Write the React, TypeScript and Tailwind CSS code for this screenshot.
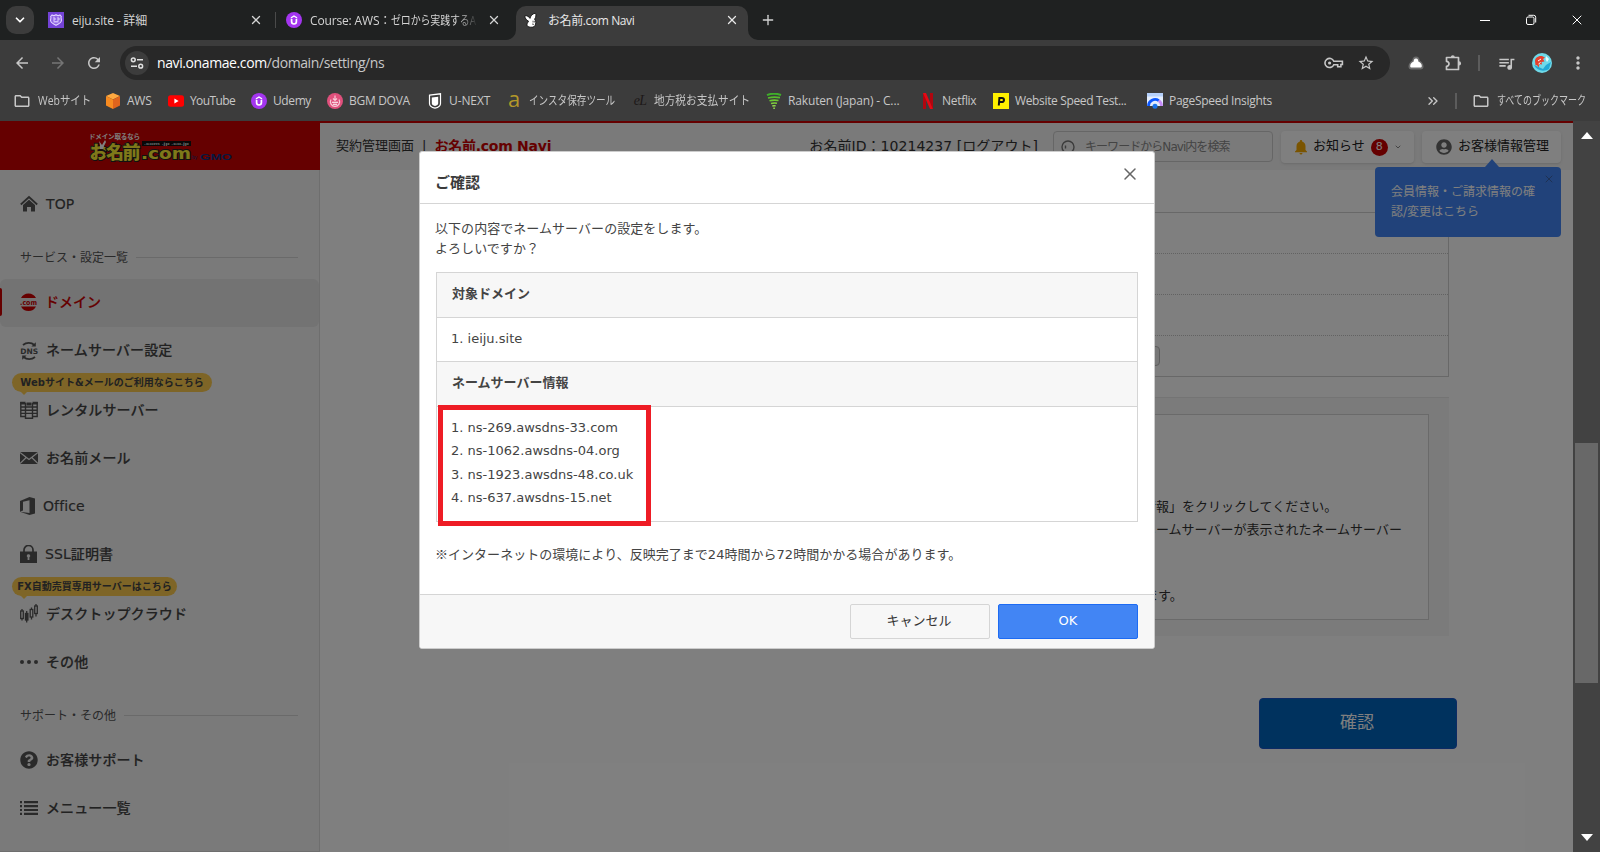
import React from "react";
import {
  MdArrowBack,
  MdArrowForward,
  MdRefresh,
  MdStarBorder,
  MdMoreVert,
  MdOutlineFolder,
  MdQueueMusic,
  MdNotifications,
} from "react-icons/md";
import { FaQuestionCircle, FaUserCircle } from "react-icons/fa";
import { ChevronDown, ChevronsRight, Plus, X } from "lucide-react";

const UdemyIcon = () => (
  <svg viewBox="0 0 16 16" className="size-4 shrink-0">
    <circle cx="8" cy="8" r="8" fill="#a435f0" />
    <path d="M5.6 7v2.6a2.4 2.4 0 0 0 4.8 0V7" fill="none" stroke="#fff" strokeWidth="1.7" />
    <path d="M4.8 5.2 8 3.2l3.2 2v1.5L8 4.8 4.8 6.7z" fill="#fff" />
  </svg>
);

const Route53Icon = () => (
  <svg viewBox="0 0 16 16" className="size-4 shrink-0">
    <rect width="16" height="16" fill="#7443d6" />
    <path
      d="M4 3c1.300.9 2.700.7 4-.3 1.300 1 2.700 1.200 4 .3l1.300 1.500c-.9 1.400.5 2.500.1 4.500-.5 2.300-3.200 2.600-5.400 4.300-2.200-1.700-4.900-2-5.400-4.300-.4-2 1-3.100.1-4.500z"
      fill="#8e63e2"
      stroke="#e2d4ff"
      strokeWidth="1.100"
    />
    <path d="M5 6h2v2H5M9 6h2v2H9" fill="none" stroke="#e2d4ff" strokeWidth="1" />
    <path d="M5.500 9.800h5" stroke="#e2d4ff" strokeWidth="1.200" />
  </svg>
);

const RabbitIcon = () => (
  <svg viewBox="0 0 16 16" className="size-4 shrink-0">
    <path
      d="M.8 3.800c1.500-.5 3 .2 4.200 1.300l1 1.300C6.500 4.300 8 1.800 11.200 1.200c1.300 1.400.8 4-.6 6l1 1.800c.5 2-.1 4.200-1.400 5.600-1.700 1-5 .8-6.700-.3-.8-1.200-.6-2.800.4-4l.6-1.200C2.500 8.300.9 6.300.8 3.800z"
      fill="#fff"
      stroke="#111"
      strokeWidth=".9"
    />
    <path d="M9 8.700v1.800M10.300 9v1.500M8 12l2 .4" stroke="#333" strokeWidth=".8" />
  </svg>
);

const AwsIcon = () => (
  <svg viewBox="0 0 16 16" className="size-4 shrink-0">
    <path d="M8 0l7 3-7 3.500L1 3z" fill="#ffa940" />
    <path d="M1 3l7 3.500V16l-7-3.500z" fill="#f78b20" />
    <path d="M15 3L8 6.500V16l7-3.500z" fill="#e0641d" />
  </svg>
);

const YoutubeIcon = () => (
  <svg viewBox="0 0 16 16" className="size-4 shrink-0">
    <rect y="2.300" width="16" height="11.400" rx="2.500" fill="#f00" />
    <path d="M6.400 5.600v4.800L10.600 8z" fill="#fff" />
  </svg>
);

const DovaIcon = () => (
  <svg viewBox="0 0 16 16" className="size-4 shrink-0">
    <circle cx="8" cy="8" r="8" fill="#e0507c" />
    <path d="M4 6.500a4.600 4.600 0 1 0 8 0M6 5.500l2 2 2-2M8 2.500v5" fill="none" stroke="#f8cbd8" strokeWidth="1.200" />
    <path d="M5 9.300h6M6 11.300h4" stroke="#fff" strokeWidth="1.100" />
  </svg>
);

const UnextIcon = () => (
  <svg viewBox="0 0 16 16" className="size-4 shrink-0">
    <path d="M2.500 2.200L13.500.8v9.700c0 2.600-2.300 4-5.500 4.700-3.200-.7-5.500-2.100-5.500-4.700z" fill="none" stroke="#fff" strokeWidth="1.200" />
    <path d="M4.800 4.500l6.400-.8v6.500c0 1.500-1.200 2.300-3.200 2.800-2-.5-3.200-1.300-3.200-2.800z" fill="#fff" />
  </svg>
);

const GoldAIcon = () => (
  <span className="-mt-1.5 w-3.5 shrink-0 text-center font-['Open_Sans'] text-[22px] leading-4 text-[#b3982a]">a</span>
);

const TaxIcon = () => (
  <span className="w-4 shrink-0 text-center font-['Liberation_Serif'] text-[14px] leading-4 italic tracking-tighter text-[#1c1818]">
    eL
  </span>
);

const RakutenIcon = () => (
  <svg viewBox="0 0 16 16" className="size-4 shrink-0">
    <path d="M1 2.200C5 .300 11 .500 15 2" stroke="#3fae2a" strokeWidth="2" fill="none" />
    <path d="M2 5c4-1 8-1 12-.4" stroke="#56bd2c" strokeWidth="1.700" fill="none" />
    <path d="M3.500 7.800c3-.8 6-.8 9-.3" stroke="#6cc832" strokeWidth="1.700" fill="none" />
    <path d="M5 10.500c2-.6 4-.6 6-.2" stroke="#7ed13c" strokeWidth="1.600" fill="none" />
    <path d="M6.300 13c1.200-.4 2.200-.4 3.400-.1M7.300 15.200h1.600" stroke="#8fd94b" strokeWidth="1.400" fill="none" />
  </svg>
);

const NetflixIcon = () => (
  <svg viewBox="0 0 16 16" className="size-4 shrink-0">
    <path d="M3 0h3v16l-3 .3zM10 0h3v16.300L10 16z" fill="#b1060f" />
    <path d="M3 0h3l7 16.300-3-.3z" fill="#e50914" />
  </svg>
);

const PingdomIcon = () => (
  <svg viewBox="0 0 16 16" className="size-4 shrink-0">
    <rect width="16" height="16" fill="#fff000" />
    <path d="M5.800 12.500l.6-7.600h2.500a2 2 0 0 1 0 4.200H6.500" fill="none" stroke="#111" strokeWidth="2" />
  </svg>
);

const PageSpeedIcon = () => (
  <svg viewBox="0 0 16 16" className="size-4 shrink-0">
    <rect width="16" height="13" fill="#e3edfd" />
    <rect width="16" height="3.500" fill="#b5d0fb" />
    <path d="M1.500 13a6.600 6.600 0 0 1 10.300-5.400" fill="none" stroke="#0b57ff" strokeWidth="2.800" />
    <path d="M11.800 7.600a6.600 6.600 0 0 1 2.700 5.400" fill="none" stroke="#c58af9" strokeWidth="2.800" />
    <circle cx="8" cy="13.200" r="2.500" fill="#1a73e8" />
  </svg>
);

const KeyIcon = () => (
  <svg viewBox="0 0 20 12" className="h-3 w-5" fill="none" stroke="#c7c7c7" strokeWidth="1.600">
    <path d="M9.800 4.200h8.600v3.300h-1.500v2.300h-3.200V7.700H9.800a4.600 4.600 0 1 1 0-3.500z" />
    <circle cx="5.600" cy="6" r="1.600" fill="#c7c7c7" stroke="none" />
  </svg>
);

const ExtensionIcon = () => (
  <svg viewBox="0 0 18 18" className="size-[18px]">
    <path
      d="M2.500 3.500h12v12h-12v-3.200a2.400 2.400 0 0 0 0-5z"
      fill="none"
      stroke="#c7c7c7"
      strokeWidth="1.700"
      strokeLinejoin="round"
    />
    <path d="M6.800 3.200a2 2 0 0 1 4 0zM15 7.300a2.100 2.100 0 0 1 0 4.200z" fill="#c7c7c7" />
  </svg>
);

const FolderIcon = () => <MdOutlineFolder className="-mx-px size-[18px] shrink-0 text-[#c7c7c7]" />;

const bookmarks = [
  { label: "Webサイト", icon: <FolderIcon />, width: "w-[91px]", fit: "ml-0.5 origin-left scale-x-[0.87]" },
  { label: "AWS", icon: <AwsIcon />, width: "w-[63px]", fit: "tracking-[-0.25px]" },
  { label: "YouTube", icon: <YoutubeIcon />, width: "w-[83px]", fit: "tracking-[-0.6px]" },
  { label: "Udemy", icon: <UdemyIcon />, width: "w-[76px]", fit: "tracking-[-0.4px]" },
  { label: "BGM DOVA", icon: <DovaIcon />, width: "w-[100px]", fit: "tracking-[-0.3px]" },
  { label: "U-NEXT", icon: <UnextIcon />, width: "w-[80px]", fit: "tracking-[-0.1px]" },
  { label: "インスタ保存ツール", icon: <GoldAIcon />, width: "w-[125px]", fit: "ml-0.5 origin-left scale-x-[0.8]" },
  { label: "地方税お支払サイト", icon: <TaxIcon />, width: "w-[134px]", fit: "origin-left scale-x-[0.89]" },
  { label: "Rakuten (Japan) - C...", icon: <RakutenIcon />, width: "w-[154px]", fit: "tracking-[-0.15px]" },
  { label: "Netflix", icon: <NetflixIcon />, width: "w-[73px]", fit: "tracking-[-0.3px]" },
  { label: "Website Speed Test...", icon: <PingdomIcon />, width: "w-[154px]", fit: "tracking-[-0.35px]" },
  { label: "PageSpeed Insights", icon: <PageSpeedIcon />, width: "w-[140px]", fit: "tracking-[-0.3px]" },
];

const TabStrip = () => (
  <div className="flex h-10 bg-[#1f2121] text-[12px] text-[#d4d4d4]">
    <div className="mt-1.5 ml-1.5 flex size-7 items-center justify-center rounded-[10px] bg-[#3c3c3c]">
      <ChevronDown className="size-3.5 text-white" strokeWidth={3} />
    </div>
    <div className="ml-3.5 flex h-10 w-[227px] items-center">
      <Route53Icon />
      <span className="mt-0.5 ml-2 flex-1 tracking-[-0.15px]">eiju.site - 詳細</span>
      <X className="mr-3 size-3.5" strokeWidth={2.2} />
    </div>
    <div className="mt-3 h-4 w-px bg-[#4a4a4a]" />
    <div className="ml-2.5 flex h-10 w-[230px] items-center">
      <UdemyIcon />
      <span className="mt-0.5 ml-2 w-[168px] whitespace-nowrap tracking-[-0.15px] [mask-image:linear-gradient(to_right,black_88%,transparent)]">
        Course: AWS：<span className="inline-block origin-left scale-x-[0.83]">ゼロから実践するA</span>
      </span>
      <X className="ml-[9px] size-3.5" strokeWidth={2.2} />
    </div>
    <div className="relative mt-1.5 flex h-[34px] w-[232px] items-center rounded-t-[10px] bg-[#3c3c3c] pb-1.5 pl-2 text-[#e8e8e8]">
      <svg viewBox="0 0 10 10" className="absolute bottom-0 -left-2.5 size-2.5">
        <path d="M10 0v10H0A10 10 0 0 0 10 0z" fill="#3c3c3c" />
      </svg>
      <svg viewBox="0 0 10 10" className="absolute -right-2.5 bottom-0 size-2.5">
        <path d="M0 0v10h10A10 10 0 0 1 0 0z" fill="#3c3c3c" />
      </svg>
      <RabbitIcon />
      <span className="mt-0.5 ml-2 flex-1 tracking-[-0.4px]">お名前.com Navi</span>
      <X className="mr-[9px] size-3.5" strokeWidth={2.2} />
    </div>
    <Plus className="mt-[12px] ml-3 size-4" strokeWidth={2} />
    <div className="ml-auto flex h-10 items-center text-white">
      <div className="flex w-[46px] justify-center">
        <div className="h-px w-2.5 bg-white" />
      </div>
      <div className="flex w-[46px] justify-center">
        <svg viewBox="0 0 10 10" className="size-2.5 overflow-visible" fill="none" stroke="#fff">
          <rect x=".5" y="2" width="7.500" height="7.500" rx="1.500" />
          <path d="M2.500 .300h5.200a2 2 0 0 1 2 2v5.200" />
        </svg>
      </div>
      <div className="flex w-[46px] justify-center">
        <X className="size-4" strokeWidth={1.500} />
      </div>
    </div>
  </div>
);

const AddressBar = () => (
  <div className="flex h-[46px] items-center text-[#c7c7c7]">
    <MdArrowBack className="ml-[13px] size-[18px]" />
    <MdArrowForward className="ml-[18px] size-[18px] text-[#757575]" />
    <MdRefresh className="ml-[18px] size-[18px]" />
    <div className="ml-[17px] flex h-[34px] w-[1270px] items-center rounded-full bg-[#282828] pl-[5px]">
      <div className="flex size-6 items-center justify-center rounded-full bg-[#3c3c3c]">
        <svg viewBox="0 0 14 14" className="size-3.5" fill="none" stroke="#e0e0e0" strokeWidth="1.500">
          <circle cx="3.300" cy="3.800" r="1.900" />
          <path d="M7 3.800h6M1 10.200h6" />
          <circle cx="10.700" cy="10.200" r="1.900" />
        </svg>
      </div>
      <span className="-mt-px ml-2 text-[14px] tracking-[-0.4px]">
        <span className="text-white">navi.onamae.com</span>/domain/setting/ns
      </span>
      <div className="ml-auto">
        <KeyIcon />
      </div>
      <MdStarBorder className="mr-[15px] ml-[13px] size-[18px]" />
    </div>
    <svg viewBox="0 0 16 14" className="ml-[18px] h-3.5 w-4">
      <path d="M8 .5c2.200 0 3.500 1.400 3.700 4C14 6 15.500 8 15.500 10.500c0 2-1 3-3 3h-9c-2 0-3-1-3-3C.5 8 2 6 4.300 4.500 4.500 1.900 5.800.5 8 .5z" fill="#6b6b6b" />
      <path d="M8 2.500c2 0 2.300 1.500 2.300 3 2 .7 3.500 2.500 3.500 4.500 0 1-.6 1.500-1.500 1.500H3.700c-.9 0-1.500-.5-1.500-1.500 0-2 1.500-3.800 3.500-4.500 0-1.500.3-3 2.300-3z" fill="#fff" />
    </svg>
    <div className="ml-5">
      <ExtensionIcon />
    </div>
    <div className="ml-[16px] h-4 w-0.5 bg-[#5c5c5c]" />
    <MdQueueMusic className="ml-[17px] size-[19px]" />
    <svg viewBox="0 0 20 20" className="ml-[16px] size-5">
      <circle cx="10" cy="10" r="10" fill="#6fd9e8" />
      <path d="M2 12c3 6 10 7 15 4l2-7-5 3-3 4z" fill="#22a9d6" />
      <path d="M3 8c0-3 3-5.500 7-5l3 1.500-2 1.500 1.500 2.500-3 .5.500 2.500-2.500-.5-1 3.500-1.500-2.500-1.500.5z" fill="#e8402c" />
      <path d="M6 8l3-2M6.500 11l2-1.500" stroke="#fff" strokeWidth="1" fill="none" />
      <path d="M14 3l3 3-2 3-1.500-3z" fill="#e4fbfd" />
    </svg>
    <MdMoreVert className="ml-[16px] size-[20px]" />
  </div>
);

const BookmarksBar = () => (
  <div className="flex h-[35px] items-center pb-[5px] pl-3.5 text-[12px] text-[#c7c7c7]">
    {bookmarks.map((item) => (
      <div key={item.label} className={`${item.width} flex shrink-0 items-center gap-1.5 whitespace-nowrap`}>
        {item.icon}
        <span className={item.fit}>{item.label}</span>
      </div>
    ))}
    <ChevronsRight className="ml-[138px] size-4 shrink-0" strokeWidth={2} />
    <div className="mr-4 ml-[14px] h-4 w-0.5 shrink-0 bg-[#5c5c5c]" />
    <FolderIcon />
    <span className="ml-2 w-[90px] origin-left scale-x-[0.75] whitespace-nowrap">すべてのブックマーク</span>
  </div>
);

const menuIcon = "w-[18px] h-[18px] shrink-0";

const HomeIcon = () => (
  <svg viewBox="0 0 18 18" className={menuIcon}>
    <path d="M.8 9.500L9 2l8.200 7.500" fill="none" stroke="#555" strokeWidth="1.800" />
    <path d="M3 10l6-5.200 6 5.200v6.500h-4V12H7v4.500H3z" fill="#555" />
  </svg>
);

const DomainIcon = () => (
  <svg viewBox="0 0 18 18" className={`${menuIcon} overflow-visible`}>
    <path d="M1 5a8.500 8.500 0 0 1 15 0zM1 13.500a8.500 8.500 0 0 0 15 0z" fill="#c00" />
    <text
      x="0"
      y="11.500"
      fill="#c00"
      textLength="17"
      lengthAdjust="spacingAndGlyphs"
      className="font-['DejaVu_Sans'] text-[7px] font-bold"
    >
      .com
    </text>
  </svg>
);

const DnsIcon = () => (
  <svg viewBox="0 0 18 18" className={`${menuIcon} overflow-visible`}>
    <path d="M3 4a9 9 0 0 1 11.500 0M15 16a9 9 0 0 1-11.500 0" fill="none" stroke="#555" strokeWidth="1.800" />
    <path d="M15.800 1.300v4.200h-4.400zM2.200 18.700v-4.200h4.400z" fill="#555" />
    <text x="9.300" y="12.800" textAnchor="middle" fill="#555" className="font-['DejaVu_Sans'] text-[7.5px] font-bold">
      DNS
    </text>
  </svg>
);

const ServerIcon = () => (
  <svg viewBox="0 0 18 18" className={menuIcon} fill="none" stroke="#555" strokeWidth="1.400">
    <path d="M.8 1v14.500h4.500M17.200 1v14.500h-4.500M1 6h16M1 9.200h16M1 12.400h16M5.500 2v15.200h7V2" />
    <path d="M.2 2.200h5.300M6.500 3h5M12.500 2.200h5.300" strokeWidth="2.800" />
  </svg>
);

const MailIcon = () => (
  <svg viewBox="0 0 18 18" className={menuIcon}>
    <path d="M0 3h18v12H0z" fill="#555" />
    <path d="M0 3.500l9 7 9-7M0 14.500l6.200-6M18 14.500l-6.200-6" fill="none" stroke="#f4f4f4" strokeWidth="1.200" />
  </svg>
);

const OfficeIcon = () => (
  <svg viewBox="0 0 15 18" className="h-[18px] w-[15px] shrink-0">
    <path d="M0 4l9.500-4L15 1.500v15L9.500 18 0 14.800l9.500 1.100V3.200L3 4.800v8.700l-3 1.300z" fill="#555" />
  </svg>
);

const LockIcon = () => (
  <svg viewBox="0 0 17 18" className="h-[18px] w-[17px] shrink-0">
    <path d="M4 8V5a4.500 4.500 0 0 1 9 0v3" fill="none" stroke="#555" strokeWidth="1.700" />
    <path d="M0 6.500h17V18H0z" fill="#555" />
    <path d="M8.500 9.300a1.600 1.600 0 0 1 .9 3v2.800H7.600v-2.800a1.600 1.600 0 0 1 .9-3z" fill="#f4f4f4" />
  </svg>
);

const CandleIcon = () => (
  <svg viewBox="0 0 18 18" className={`${menuIcon} overflow-visible`} fill="none" stroke="#555" strokeWidth="1.300">
    <rect x=".7" y="6" width="2.600" height="7.500" />
    <path d="M2 4v2M2 13.500v2M6.700 6v11.500" />
    <rect x="5.500" y="8.500" width="2.400" height="6.500" fill="#555" />
    <rect x="10.200" y="4.500" width="2.600" height="7.500" />
    <path d="M11.500 2.500v2M11.500 12v2.500" />
    <rect x="14.700" y="1" width="2.600" height="7.500" />
    <path d="M16-1v2M16 8.500v3" />
  </svg>
);

const DotsIcon = () => (
  <svg viewBox="0 0 18 18" className={menuIcon} fill="#555">
    <circle cx="2" cy="9" r="2" />
    <circle cx="9" cy="9" r="2" />
    <circle cx="16" cy="9" r="2" />
  </svg>
);

const ListIcon = () => (
  <svg viewBox="0 0 18 18" className={menuIcon} stroke="#555" strokeWidth="2.200">
    <path d="M0 3.200h2M4 3.200h14M0 7.100h2M4 7.100h14M0 11h2M4 11h14M0 14.900h2M4 14.900h14" />
  </svg>
);

interface MenuItemProps {
  icon: React.ReactNode;
  label: string;
  balloon?: string;
  balloonClass?: string;
}

const MenuItem = ({ icon, label, balloon, balloonClass }: MenuItemProps) => (
  <div className={`relative flex h-12 items-center gap-2 pb-0.5 pl-5 text-[14px] font-medium text-[#444] ${balloon ? "mt-3" : ""}`}>
    {balloon && (
      <div
        className={`absolute -top-3.5 left-3 flex h-[19px] items-center justify-center rounded-full bg-[#fccb4f] text-[10px] font-bold whitespace-nowrap text-[#444] ${balloonClass}`}
      >
        {balloon}
        <div className="absolute top-[18px] left-2 border-x-4 border-t-4 border-x-transparent border-t-[#fccb4f]" />
      </div>
    )}
    {icon}
    <span className="tracking-[0.1px] [-webkit-text-stroke:0.15px]">{label}</span>
  </div>
);

const SectionTitle = ({ children }: { children: React.ReactNode }) => (
  <div className="flex h-[50px] items-center pt-[7px] pr-[21px] pl-5 text-[12px] text-[#555]">
    <span>{children}</span>
    <div className="ml-2 h-px flex-1 bg-[#d5d5d5]" />
  </div>
);

const Logo = () => (
  <svg viewBox="0 0 144 32" className="ml-[88px] h-8 w-36">
    <text x="1" y="7.500" fill="#fff" textLength="51" className="font-['Noto_Sans_CJK_JP'] text-[6.5px] font-bold">
      ドメイン取るなら
    </text>
    <text x="1.500" y="27.500" fill="#fff032" stroke="#222" strokeWidth="2" paintOrder="stroke" textLength="51" className="font-['Noto_Sans_CJK_JP'] text-[18px] font-black">
      お名前
    </text>
    <text x="53" y="27.500" fill="#fff032" stroke="#222" strokeWidth="2" paintOrder="stroke" textLength="50" lengthAdjust="spacingAndGlyphs" className="font-['DejaVu_Sans'] text-[16px] font-bold">
      .com
    </text>
    <rect x="54" y="10" width="49" height="5" fill="#111" />
    <text x="56" y="13.800" fill="#ddd" textLength="45" lengthAdjust="spacingAndGlyphs" className="font-['Liberation_Sans'] text-[4px] font-bold">
      .com .jp .co.jp
    </text>
    <path d="M11 10l3 4 3-5 1 2-2 4-1 3h-3v-4z" fill="#fff" />
    <text x="104" y="28" fill="#0c3182" className="font-['Liberation_Sans'] text-[5px]">
      by
    </text>
    <text x="112" y="28.500" fill="#0c3182" textLength="32" lengthAdjust="spacingAndGlyphs" className="font-['Liberation_Sans'] text-[9px] font-bold">
      GMO
    </text>
  </svg>
);

const Sidebar = () => (
  <aside className="flex w-80 shrink-0 flex-col">
    <div className="h-[49px] bg-[#cb0000] pt-2.5">
      <Logo />
    </div>
    <nav className="flex-1 border-r border-b border-[#dcdcdc] bg-[#f4f4f4] pt-[11px]">
      <MenuItem icon={<HomeIcon />} label="TOP" />
      <SectionTitle>サービス・設定一覧</SectionTitle>
      <div className="relative flex h-12 items-center gap-2 rounded-md bg-[#e6e6e6] pb-0.5 pl-5 text-[14px] font-medium text-[#c00]">
        <div className="absolute top-[9px] left-0 h-7 w-0.5 rounded-r bg-[#c00]" />
        <DomainIcon />
        <span className="-ml-px [-webkit-text-stroke:0.15px]">ドメイン</span>
      </div>
      <MenuItem icon={<DnsIcon />} label="ネームサーバー設定" />
      <MenuItem icon={<ServerIcon />} label="レンタルサーバー" balloon="Webサイト&メールのご利用ならこちら" balloonClass="w-[200px]" />
      <MenuItem icon={<MailIcon />} label="お名前メール" />
      <MenuItem icon={<OfficeIcon />} label="Office" />
      <MenuItem icon={<LockIcon />} label="SSL証明書" />
      <MenuItem icon={<CandleIcon />} label="デスクトップクラウド" balloon="FX自動売買専用サーバーはこちら" balloonClass="w-[165px]" />
      <MenuItem icon={<DotsIcon />} label="その他" />
      <SectionTitle>サポート・その他</SectionTitle>
      <MenuItem icon={<FaQuestionCircle className="size-[18px] text-[#555]" />} label="お客様サポート" />
      <MenuItem icon={<ListIcon />} label="メニュー一覧" />
    </nav>
  </aside>
);

const PageHeader = () => (
  <header className="flex h-[49px] items-start border-t-2 border-[#cb0000] bg-[#f4f4f4] pr-3 pl-4 text-[13px] text-[#333]">
    <div className="flex h-[46px] items-center">
      <span>契約管理画面</span>
      <span className="mx-2">|</span>
      <span className="text-[14px] font-bold tracking-[-0.25px] text-[#cb0000]">お名前.com Navi</span>
    </div>
    <div className="ml-auto flex h-[46px] items-center text-[14px] tracking-[0.05px]">お名前ID：10214237 [ログアウト]</div>
    <div className="mt-2 ml-[15px] flex h-[31px] w-[220px] items-center rounded border border-[#ccc] pl-[7px] text-[12px] text-[#888]">
      <svg viewBox="0 0 14 14" className="size-3.5" fill="none" stroke="#777" strokeWidth="1.400">
        <circle cx="7" cy="7" r="6" />
        <path d="M4.500 5.500v3" />
      </svg>
      <span className="ml-2.5 tracking-[-0.95px] whitespace-nowrap">キーワードからNavi内を検索</span>
    </div>
    <div className="mt-2 ml-2 flex h-8 w-[133px] items-center rounded bg-white pl-[11px] text-[13px] shadow">
      <MdNotifications className="size-[18px] text-[#f5a900]" />
      <span className="-mt-0.5 ml-[3px] text-[#222]">お知らせ</span>
      <span className="ml-1.5 flex size-[17px] items-center justify-center rounded-full bg-[#cb0000] text-[11px] text-white">8</span>
      <ChevronDown className="ml-1.5 size-2 text-[#888]" strokeWidth={3} />
    </div>
    <div className="relative mt-2 ml-2 flex h-8 w-[139px] items-center rounded bg-white pl-3.5 text-[13px] text-[#222] shadow">
      <FaUserCircle className="size-4 text-[#666]" />
      <span className="-mt-0.5 ml-1.5">お客様情報管理</span>
      <div className="absolute top-9 right-0 h-[70px] w-[186px] rounded bg-[#4285f4] py-[15px] pl-4 text-[12px] leading-5 text-white">
        <div className="absolute -top-2 right-[62px] border-x-[7px] border-b-8 border-x-transparent border-b-[#4285f4]" />
        <X className="absolute top-1.5 right-1.5 size-3 text-[#3c62a8]" />
        会員情報・ご請求情報の確
        <br />
        認/変更はこちら
      </div>
    </div>
  </header>
);

const PageContent = () => (
  <main className="flex w-[1137px] flex-col pl-[110px]">
    <div className="mt-[42px] mr-2 h-[165px] border border-[#d0d0d0]">
      <div className="h-[41px] border-b border-dotted border-[#c4c4c4]" />
      <div className="h-[41px] border-b border-dotted border-[#c4c4c4]" />
      <div className="h-[41px] border-b border-dotted border-[#c4c4c4]" />
      <div className="flex h-10 items-center pl-[600px]">
        <div className="flex h-5 w-[129px] items-center justify-end rounded-sm border border-[#bbb] bg-[#f0f0f0] pr-[3px]">
          <ChevronDown className="size-1.5" strokeWidth={4} />
        </div>
      </div>
    </div>
    <div className="mt-5 mr-2 h-[239px] border-t border-[#e8e8e8] bg-[#f6f6f6] px-5 pt-4">
      <div className="h-[206px] border border-[#d4d4d4] bg-white pt-20 pl-[692px] text-[13px] leading-[23px] whitespace-nowrap text-[#333]">
        <p>情報」をクリックしてください。</p>
        <p>ネームサーバーが表示されたネームサーバー</p>
        <p className="mt-[43px] ml-0.5">ます。</p>
      </div>
    </div>
    <button className="mt-[62px] h-[51px] w-[198px] self-end rounded-sm border border-[#1a56c8] bg-[#0064bc] pr-0.5 pb-0.5 text-[17px] text-white">
      確認
    </button>
  </main>
);

const nameServers = ["ns-269.awsdns-33.com", "ns-1062.awsdns-04.org", "ns-1923.awsdns-48.co.uk", "ns-637.awsdns-15.net"];

const ConfirmDialog = () => (
  <div className="mt-[30px] ml-[419px] flex h-[498px] w-[736px] flex-col overflow-hidden rounded-[3px] border border-[#ccc] bg-white text-[13px] text-[#444]">
    <div className="flex h-[52px] shrink-0 items-center justify-between border-b border-[#d5d5d5] pt-[11px] pr-3.5 pl-[15px]">
      <h2 className="text-[15px] font-bold text-[#3a3a3a]">ご確認</h2>
      <X className="-mt-[18px] size-5 text-[#666]" strokeWidth={1.800} />
    </div>
    <div className="relative flex-1 px-4 pt-[15px]">
      <p className="-ml-px leading-5 tracking-[0.05px]">
        以下の内容でネームサーバーの設定をします。
        <br />
        よろしいですか？
      </p>
      <div className="mt-[13px] h-[250px] border border-[#d5d5d5]">
        <div className="flex h-[45px] items-center border-b border-[#d5d5d5] bg-[#f7f7f7] pb-[3px] pl-[15px] font-bold">対象ドメイン</div>
        <div className="flex h-11 items-center border-b border-[#d5d5d5] pb-0.5 pl-3.5">1. ieiju.site</div>
        <div className="flex h-[45px] items-center border-b border-[#d5d5d5] bg-[#f7f7f7] pb-[3px] pl-[15px] font-bold">ネームサーバー情報</div>
        <ol className="pt-[9px] pl-3.5 leading-[23.4px]">
          {nameServers.map((ns, i) => (
            <li key={ns}>
              {i + 1}. {ns}
            </li>
          ))}
        </ol>
      </div>
      <div className="absolute top-[201px] left-[18px] h-[121px] w-[213px] border-[5px] border-[#ee1c25]" />
      <p className="mt-[22px] -ml-px leading-5 tracking-[0.03px]">
        <span className="font-['Noto_Sans_CJK_JP']">※</span>
        インターネットの環境により、反映完了まで24時間から72時間かかる場合があります。
      </p>
    </div>
    <div className="flex h-[54px] shrink-0 justify-end gap-2 border-t border-[#d5d5d5] bg-[#f7f7f7] pt-[9px] pr-4">
      <button className="h-[35px] w-[140px] rounded-[2px] border border-[#d5d5d5] pr-0.5 pb-0.5 text-[#333]">キャンセル</button>
      <button className="h-[35px] w-[140px] rounded-[2px] border border-[#1d6bf3] bg-[#4285f4] pb-0.5 text-white">OK</button>
    </div>
  </div>
);

const Scrollbar = () => (
  <div className="flex w-[27px] flex-col items-center bg-[#424242]">
    <div className="mt-[11px] border-x-[6.5px] border-b-[7px] border-x-transparent border-b-white" />
    <div className="mt-[304px] h-60 w-[23px] bg-[#686868]" />
    <div className="mt-auto mb-[11px] border-x-[6.5px] border-t-[7px] border-x-transparent border-t-white" />
  </div>
);

const App = () => {
  return (
    <div className="flex h-[852px] w-[1600px] flex-col overflow-hidden bg-[#3c3c3c] font-['Open_Sans','Noto_Sans_CJK_JP',sans-serif]">
      <TabStrip />
      <AddressBar />
      <BookmarksBar />
      <div className="flex min-h-0 flex-1 font-['DejaVu_Sans','Noto_Sans_CJK_JP',sans-serif]">
        <div className="relative flex w-[1573px] bg-white">
          <Sidebar />
          <div className="flex-1">
            <PageHeader />
            <PageContent />
          </div>
          <div className="absolute inset-0 bg-black/50">
            <ConfirmDialog />
          </div>
        </div>
        <Scrollbar />
      </div>
    </div>
  );
};

export default App;
